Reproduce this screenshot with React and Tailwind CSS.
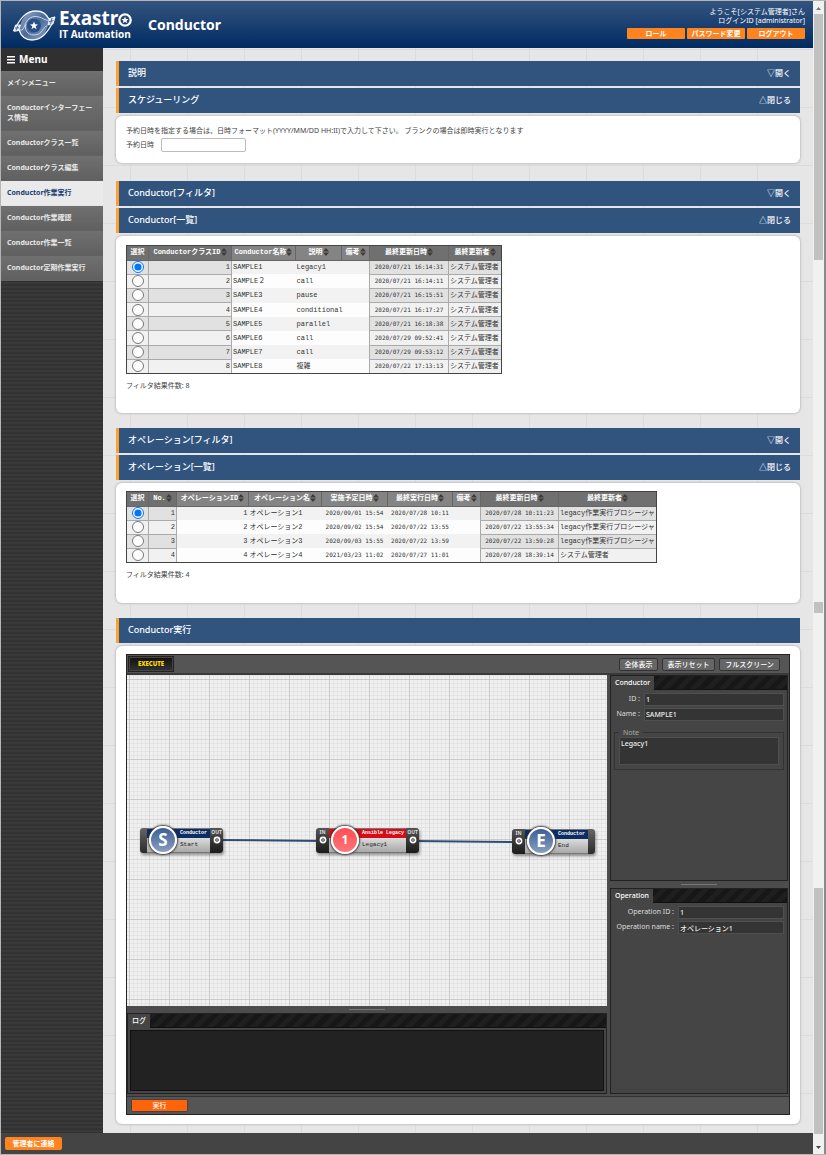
import React from "react";

const SANS = "font-['Noto_Sans','Noto_Sans_CJK_JP',sans-serif]";
const MONO = "font-['Liberation_Mono','Noto_Sans_CJK_JP',monospace]";

function LogoMark() {
  return (
    <svg viewBox="0 0 44 32" className="h-8 w-11 shrink-0" aria-hidden="true">
      <defs>
        <linearGradient id="swirl" x1="0" y1="0" x2="1" y2="1">
          <stop offset="0" stopColor="#9fb4d0" />
          <stop offset="0.5" stopColor="#4a6a99" />
          <stop offset="1" stopColor="#8fa7c8" />
        </linearGradient>
      </defs>
      <path d="M7 21 C9 9 15 2 24 2 C30 2 34 5 37 10 L36 17 C33 26 28 31 20 31 C14 31 9 27 7 21 Z" fill="url(#swirl)" />
      <path d="M2 22 C8 9 14 2 24 2 C31 2 34 5 37 10 L43 8 M42 11 C35 25 29 31 20 31 C13 31 9 27 7 21 L2 22" fill="none" stroke="#f2f5fa" strokeWidth="1.300" />
      <path d="M3.500 16 L8.500 16 L6.500 21.500 L1.500 22 Z M37.500 9.500 L43 8 L41 15 L36 16 Z" fill="#dfe7f1" stroke="#fff" strokeWidth="0.800" />
      <path d="M6 16.500 L4 21.500 M3 19 L7 18.800 M40 9 L38.500 15.500 M37 12.800 L41.500 11.500" stroke="#31568d" strokeWidth="0.800" />
      <path d="M8 21 C14 23 11 9 22 7.500 C30 7 34 13 37 11 M35 17 C31 17 31 26 22 26 C15 26 12 20 14 15" fill="none" stroke="#c6d3e5" strokeWidth="1" />
      <circle cx="22" cy="16.500" r="7" fill="#2a4f86" />
      <path d="M22 12.500 L23.100 15.300 L26 15.500 L23.700 17.300 L24.500 20.200 L22 18.600 L19.500 20.200 L20.300 17.300 L18 15.500 L20.900 15.300 Z" fill="#fff" />
    </svg>
  );
}

function StarO() {
  return (
    <svg viewBox="0 0 14 14" className="mt-1 size-3.5 shrink-0" aria-hidden="true">
      <circle cx="7" cy="7" r="5.700" fill="none" stroke="#fff" strokeWidth="2.300" />
      <path d="M7 3.500 L8 6 L10.600 6.100 L8.600 7.700 L9.300 10.200 L7 8.800 L4.700 10.200 L5.400 7.700 L3.400 6.100 L6 6 Z" fill="#fff" />
    </svg>
  );
}

function Header() {
  return (
    <header className="flex h-[47px] items-center bg-linear-to-b from-[#33547f] to-[#002b62] pr-2 pl-[11px] text-white">
      <LogoMark />
      <div className="ml-[3px] w-[74px] shrink-0 font-['Open_Sans',sans-serif] font-bold whitespace-nowrap">
        <div className="flex h-[19px] items-center text-[19px] leading-[19px]">
          Exastr
          <StarO />
        </div>
        <div className="text-[10px] leading-[13px]">IT Automation</div>
      </div>
      <h1 className="ml-[15px] text-[14px] font-bold">Conductor</h1>
      <div className="ml-auto flex flex-col items-end pb-[3px] text-[7px] leading-[9px]">
        <span>ようこそ[システム管理者]さん</span>
        <span>ログインID [administrator]</span>
        <div className="mt-[3px] flex gap-[2px]">
          {["ロール", "パスワード変更", "ログアウト"].map((t) => (
            <button key={t} type="button" className="h-[11px] w-[58px] rounded-[1px] bg-[#ff8420] leading-[11px] font-bold whitespace-nowrap">
              {t}
            </button>
          ))}
        </div>
      </div>
    </header>
  );
}

const MENU = [
  "メインメニュー",
  "Conductorインターフェース情報",
  "Conductorクラス一覧",
  "Conductorクラス編集",
  "Conductor作業実行",
  "Conductor作業確認",
  "Conductor作業一覧",
  "Conductor定期作業実行",
];

function Sidebar() {
  return (
    <nav className="w-[102px] shrink-0 bg-[repeating-linear-gradient(to_bottom,#323232_0_2px,#393939_2px_4px)]">
      <div className="flex h-[23px] items-center gap-1 bg-[#303030] px-1.5 text-[10px] font-bold text-white">
        <svg viewBox="0 0 8 8" className="size-2" aria-hidden="true">
          <path d="M0 0h8v1.500H0z M0 3h8v1.500H0z M0 6h8v1.500H0z" fill="#fff" />
        </svg>
        Menu
      </div>
      <ul>
        {MENU.map((t) => {
          const active = t === "Conductor作業実行";
          return (
            <li key={t}>
              <a
                href="#"
                aria-current={active ? "page" : undefined}
                className={
                  "block border-b px-1.5 py-[7px] text-[7px] leading-[10px] font-bold " +
                  (active
                    ? "border-[#e6e6e6] bg-[#eaeaea] text-[#163c70]"
                    : "border-[#626262] bg-linear-to-b from-[#707070] to-[#606060] text-[#e8e8e8]")
                }
              >
                {t}
              </a>
            </li>
          );
        })}
      </ul>
    </nav>
  );
}

function Bar({ title, action }) {
  return (
    <div className="flex h-[25px] items-center justify-between border-l-[3px] border-[#f9a02f] bg-[#31547f] px-[9px] pb-px text-[9px] text-white">
      <h2 className="font-medium">{title}</h2>
      {action && (
        <button type="button" className="text-[8px] font-medium">
          {action}
        </button>
      )}
    </div>
  );
}

function Card({ className, children }) {
  return <div className={"mt-[3px] rounded-md bg-white px-[10px] shadow-[0_0_2px_1px_#c4c4c4] " + className}>{children}</div>;
}

function Sort() {
  return (
    <svg viewBox="0 0 6 8" className="inline-block h-2 w-1.5 align-middle" aria-hidden="true">
      <path d="M3 0 L6 3.500 H0 Z M3 8 L6 4.500 H0 Z" fill="#3c3c3c" />
    </svg>
  );
}

/* k: "f" fixed bordered column, "p" plain column; d: date column; r: right aligned */
function DataTable({ name, cols, rows, height, width }) {
  return (
    <table className={"table-fixed border-collapse text-[7px] leading-[8px] text-[#333] outline outline-[#444] -outline-offset-1 " + MONO + " " + height + " " + width}>
      <colgroup>
        {cols.map((c) => (
          <col key={c.t} className={c.w} />
        ))}
      </colgroup>
      <thead>
        <tr className="h-[15px]">
          {cols.map((c, i) => (
            <th
              key={c.t}
              scope="col"
              className={"border-x border-b border-[#666] p-0 font-bold whitespace-nowrap text-white " + (c.k === "f" ? "bg-[#707070]" : "bg-[#848484]")}
            >
              {c.t}
              {i > 0 && <Sort />}
            </th>
          ))}
        </tr>
      </thead>
      <tbody>
        {rows.map((r, ri) => (
          <tr key={ri}>
            {cols.map((c, i) => (
              <td
                key={c.t}
                className={
                  "px-px py-0 whitespace-nowrap " +
                  (c.r ? "text-right " : "") +
                  (c.d ? "text-center font-['DejaVu_Sans_Mono',monospace] text-[6px] " : "") +
                  (c.k === "f"
                    ? "border border-[#aaa] " + (ri % 2 ? "bg-[#f1f1f1]" : "bg-[#e1e1e1]")
                    : ri % 2
                      ? "bg-[#fdfdfd]"
                      : "bg-[#f2f2f2]")
                }
              >
                {i === 0 ? (
                  <input type="radio" name={name} defaultChecked={ri === 0} aria-label={"選択 " + r[0]} className="mx-auto block size-3" />
                ) : (
                  r[i - 1]
                )}
              </td>
            ))}
          </tr>
        ))}
      </tbody>
    </table>
  );
}

const C_COLS = [
  { t: "選択", k: "f", w: "w-[22px]" },
  { t: "ConductorクラスID", k: "f", w: "w-[83px]", r: true },
  { t: "Conductor名称", k: "p", w: "w-[64px]" },
  { t: "説明", k: "p", w: "w-[46px]" },
  { t: "備考", k: "p", w: "w-[28px]" },
  { t: "最終更新日時", k: "f", w: "w-[79px]", d: true },
  { t: "最終更新者", k: "f", w: "w-[53px]" },
];
const ADMIN = "システム管理者";
const C_ROWS = [
  ["1", "SAMPLE1", "Legacy1", "", "2020/07/21 16:14:31", ADMIN],
  ["2", "SAMPLE２", "call", "", "2020/07/21 16:14:11", ADMIN],
  ["3", "SAMPLE3", "pause", "", "2020/07/21 16:15:51", ADMIN],
  ["4", "SAMPLE4", "conditional", "", "2020/07/21 16:17:27", ADMIN],
  ["5", "SAMPLE5", "parallel", "", "2020/07/21 16:18:38", ADMIN],
  ["6", "SAMPLE6", "call", "", "2020/07/29 09:52:41", ADMIN],
  ["7", "SAMPLE7", "call", "", "2020/07/29 09:53:12", ADMIN],
  ["8", "SAMPLE8", "複雑", "", "2020/07/22 17:13:13", ADMIN],
];
const O_COLS = [
  { t: "選択", k: "f", w: "w-[22px]" },
  { t: "No.", k: "f", w: "w-[28px]", r: true },
  { t: "オペレーションID", k: "p", w: "w-[72px]", r: true },
  { t: "オペレーション名", k: "p", w: "w-[73px]" },
  { t: "実施予定日時", k: "p", w: "w-[66px]", d: true },
  { t: "最終実行日時", k: "p", w: "w-[65px]", d: true },
  { t: "備考", k: "p", w: "w-[28px]" },
  { t: "最終更新日時", k: "f", w: "w-[78px]", d: true },
  { t: "最終更新者", k: "f", w: "w-[98px]" },
];
const LEGACY = "legacy作業実行プロシージャ";
const O_ROWS = [
  ["1", "1", "オペレーション1", "2020/09/01 15:54", "2020/07/28 10:11", "", "2020/07/28 10:11:23", LEGACY],
  ["2", "2", "オペレーション2", "2020/09/02 15:54", "2020/07/22 13:55", "", "2020/07/22 13:55:34", LEGACY],
  ["3", "3", "オペレーション3", "2020/09/03 15:55", "2020/07/22 13:59", "", "2020/07/22 13:59:28", LEGACY],
  ["4", "4", "オペレーション4", "2021/03/23 11:02", "2020/07/27 11:01", "", "2020/07/28 18:39:14", ADMIN],
];

function Port({ label }) {
  return (
    <div className="flex w-[13px] shrink-0 flex-col items-center bg-linear-to-b from-[#555] to-[#1c1c1c]">
      <span className="text-[5px] leading-[8px] font-bold text-[#ddd]">{label}</span>
      <svg viewBox="0 0 8 8" className="size-2" aria-hidden="true">
        <circle cx="4" cy="4" r="2.600" fill="#333" stroke="#fff" strokeWidth="1.600" />
        <circle cx="4" cy="4" r="0.800" fill="#fff" />
      </svg>
    </div>
  );
}

function Node({ place, title, label, glyph, input, output, red }) {
  return (
    <div className={"absolute flex h-[25px] rounded-[3px] shadow-[1px_2px_3px_#0006] " + place}>
      <div className="flex w-full overflow-hidden rounded-[3px]">
        {input ? <Port label="IN" /> : <div className="w-[7px] bg-linear-to-b from-[#666] to-[#2c2c2c]" />}
        <div className={"min-w-0 flex-1 whitespace-nowrap text-[6px] leading-[7px] " + MONO}>
          <div className={"h-[10px] border-t border-[#777] pt-px pl-[33px] text-[5px] font-bold text-white " + (red ? "bg-[#d80c16]" : "bg-[#0b2d63]")}>
            {title}
          </div>
          <div className="h-[15px] border-b border-[#777] bg-linear-to-b from-[#dcdcdc] to-[#a9a9a9] pt-[3px] pl-[33px] text-[#222]">{label}</div>
        </div>
        {output ? <Port label="OUT" /> : <div className="w-[7px] bg-linear-to-b from-[#666] to-[#2c2c2c]" />}
      </div>
      <div
        className={
          "absolute -top-[2px] flex size-7 items-center justify-center rounded-full border-2 border-white font-bold text-white shadow-[0_0_2px_1px_#333] " +
          (input ? "left-[15px] " : "left-[9px] ") +
          (red ? "bg-linear-to-b from-[#ff4b52] to-[#ff7478] text-[12px]" : "bg-linear-to-b from-[#3d5f94] to-[#8a9fc2] text-[17px]")
        }
      >
        {glyph}
      </div>
    </div>
  );
}

function Canvas() {
  return (
    <div className="relative h-[331px] overflow-hidden bg-[#f0f0f0] bg-[linear-gradient(to_right,#cbcbcb_1px,transparent_1px),linear-gradient(to_bottom,#cbcbcb_1px,transparent_1px),linear-gradient(to_right,#d8d8d8_1px,transparent_1px),linear-gradient(to_bottom,#d8d8d8_1px,transparent_1px),linear-gradient(to_right,#e4e4e4_1px,transparent_1px),linear-gradient(to_bottom,#e4e4e4_1px,transparent_1px)] bg-size-[40px_40px,40px_40px,20px_20px,20px_20px,4px_4px,4px_4px] bg-position-[2px_4px]">
      <svg className="absolute inset-0 size-full" aria-hidden="true">
        <path d="M90 165 L195 166 M285 166 L390 167" stroke="#2f4d74" strokeWidth="2" />
      </svg>
      <Node place="left-[13px] top-[153px] w-[83px]" title="Conductor" label="Start" glyph="S" output />
      <Node place="left-[189px] top-[153px] w-[103px]" title="Ansible Legacy" label="Legacy1" glyph="1" input output red />
      <Node place="left-[385px] top-[154px] w-[83px]" title="Conductor" label="End" glyph="E" input />
    </div>
  );
}

function TabBar({ title }) {
  return (
    <div className="flex h-[14px] border-b border-[#111] bg-[repeating-linear-gradient(135deg,#171717_0_5px,#1f1f1f_5px_10px)]">
      <h3 className="h-[14px] bg-[#454545] px-[4px] text-[7px] leading-[14px] font-medium text-white">{title}</h3>
    </div>
  );
}

function Field({ id, label, value, wide }) {
  return (
    <div className="flex h-[15px] items-center text-[7px] text-[#ddd]">
      <label htmlFor={id} className={"shrink-0 pr-1 text-right whitespace-nowrap " + (wide ? "w-[64px]" : "w-[30px]")}>
        {label} :
      </label>
      <input id={id} readOnly defaultValue={value} className="h-[13px] min-w-0 flex-1 border border-[#4f4f4f] bg-[#343434] px-px font-medium text-[#eee]" />
    </div>
  );
}

function Grip() {
  return (
    <div className="flex h-[7px] items-center justify-center bg-[#4c4c4c]">
      <div className="h-px w-9 bg-[#777]" />
    </div>
  );
}

function Editor() {
  return (
    <div className="border border-[#222] bg-[#4c4c4c]">
      <div className="flex h-5 items-center gap-[4px] border-b-2 border-[#3a3a3a] bg-[#555] pr-[9px]">
        <button type="button" className="mr-auto ml-px h-4 w-[46px] border border-[#222] bg-linear-to-b from-[#111] to-[#333] text-[6px] font-black text-[#ffd800] outline outline-[#444] -outline-offset-2">
          EXECUTE
        </button>
        {[
          ["全体表示", "w-[39px]"],
          ["表示リセット", "w-[53px]"],
          ["フルスクリーン", "w-[61px]"],
        ].map(([t, w]) => (
          <button key={t} type="button" className={"h-[13px] rounded-[2px] border border-[#333] bg-[#666] text-[7px] leading-[11px] font-medium whitespace-nowrap text-white " + w}>
            {t}
          </button>
        ))}
      </div>
      <div className="flex">
        <div className="flex min-w-0 flex-1 flex-col">
          <Canvas />
          <Grip />
          <div className="border border-[#222] bg-[#454545]">
            <TabBar title="ログ" />
            <div className="m-[2px] h-[61px] border border-[#111] bg-[#222]" />
          </div>
        </div>
        <div className="flex w-[182px] shrink-0 flex-col pr-px pl-[3px]">
          <section className="flex-1 border border-[#222] bg-[#454545]">
            <TabBar title="Conductor" />
            <div className="px-[3px] pt-[2px]">
              <Field id="c-id" label="ID" value="1" />
              <Field id="c-name" label="Name" value="SAMPLE1" />
              <fieldset className="mt-[6px] border border-[#333] px-[4px] pb-[4px]">
                <legend className="px-[4px] text-[7px] leading-[9px] text-[#aaa]">Note</legend>
                <textarea readOnly aria-label="Note" defaultValue="Legacy1" className="block h-7 w-full resize-none border border-[#4f4f4f] bg-[#343434] px-px py-px text-[7px] leading-[9px] font-medium text-[#eee]" />
              </fieldset>
            </div>
          </section>
          <Grip />
          <section className="flex-1 border border-[#222] bg-[#454545]">
            <TabBar title="Operation" />
            <div className="px-[3px] pt-[2px]">
              <Field id="o-id" label="Operation ID" value="1" wide />
              <Field id="o-name" label="Operation name" value="オペレーション1" wide />
            </div>
          </section>
        </div>
      </div>
      <div className="mt-[2px] flex h-[18px] items-center border-t border-[#333] bg-[#555] px-1">
        <button type="button" className="h-[13px] w-[57px] rounded-[1px] border border-[#444] bg-[#ff640a] text-[7px] leading-[11px] font-medium text-white">
          実行
        </button>
      </div>
    </div>
  );
}

function Scrollbar() {
  return (
    <div className="flex w-[13px] shrink-0 flex-col border-r-2 border-[#8a8a8a] bg-[#f1f1f1]" aria-hidden="true">
      <svg viewBox="0 0 11 13" className="h-[13px] w-[11px]">
        <path d="M3 9 L5.500 6 L8 9 Z" fill="#777" />
      </svg>
      <div className="mx-px h-[246px] bg-[#c1c1c1]" />
      <div className="h-[342px]" />
      <div className="mx-px h-[11px] bg-[#c1c1c1]" />
      <div className="grow" />
      <div className="mx-px h-[246px] bg-[#c1c1c1]" />
      <svg viewBox="0 0 11 20" className="h-5 w-[11px]">
        <path d="M3 12 L5.500 15 L8 12 Z" fill="#444" />
      </svg>
    </div>
  );
}

export default function App() {
  return (
    <div lang="ja" className={"flex border border-r-0 border-[#b5b5b5] bg-white " + SANS}>
      <div className="min-w-0 flex-1">
        <Header />
        <div className="flex">
          <Sidebar />
          <main className="min-w-0 flex-1 bg-[#e6e6e6] bg-[linear-gradient(to_right,#dcdcdc_1px,transparent_1px),linear-gradient(to_bottom,#dcdcdc_1px,transparent_1px)] bg-size-[57px_58px] bg-position-[27px_1px] px-[13px] pt-[13px] pb-[9px]">
            <div className="flex flex-col gap-[2px]">
              <Bar title="説明" action="▽開く" />
              <Bar title="スケジューリング" action="△閉じる" />
            </div>
            <Card className="h-[47px] pt-[10px] text-[7px] leading-[10px] text-[#444]">
              <p className="whitespace-nowrap">予約日時を指定する場合は、日時フォーマット(YYYY/MM/DD HH:II)で入力して下さい。 ブランクの場合は即時実行となります</p>
              <div className="mt-[2px] flex items-center gap-[7px]">
                <label htmlFor="reserve">予約日時</label>
                <input id="reserve" className="h-[14px] w-[85px] rounded-[2px] border border-[#bbb] bg-white" />
              </div>
            </Card>

            <div className="mt-[18px] flex flex-col gap-[2px]">
              <Bar title="Conductor[フィルタ]" action="▽開く" />
              <Bar title="Conductor[一覧]" action="△閉じる" />
            </div>
            <Card className="h-[177px] pt-[9px]">
              <DataTable name="conductor" cols={C_COLS} rows={C_ROWS} height="h-[129px]" width="w-[375px]" />
              <p className="mt-[7px] text-[7px] leading-[10px] text-[#444]">フィルタ結果件数: 8</p>
            </Card>

            <div className="mt-[15px] flex flex-col gap-[2px]">
              <Bar title="オペレーション[フィルタ]" action="▽開く" />
              <Bar title="オペレーション[一覧]" action="△閉じる" />
            </div>
            <Card className="h-[120px] pt-[8px]">
              <DataTable name="operation" cols={O_COLS} rows={O_ROWS} height="h-[72px]" width="w-[530px]" />
              <p className="mt-[7px] text-[7px] leading-[10px] text-[#444]">フィルタ結果件数: 4</p>
            </Card>

            <div className="mt-[15px]">
              <Bar title="Conductor実行" />
            </div>
            <Card className="pt-[8px] pb-[9px]">
              <Editor />
            </Card>
          </main>
        </div>
        <footer className="flex h-[21px] items-center bg-[#444] px-1">
          <button type="button" className="h-[13px] w-[57px] rounded-[2px] bg-[#ff8420] text-[7px] leading-[13px] font-bold text-white">
            管理者に連絡
          </button>
        </footer>
      </div>
      <Scrollbar />
    </div>
  );
}
